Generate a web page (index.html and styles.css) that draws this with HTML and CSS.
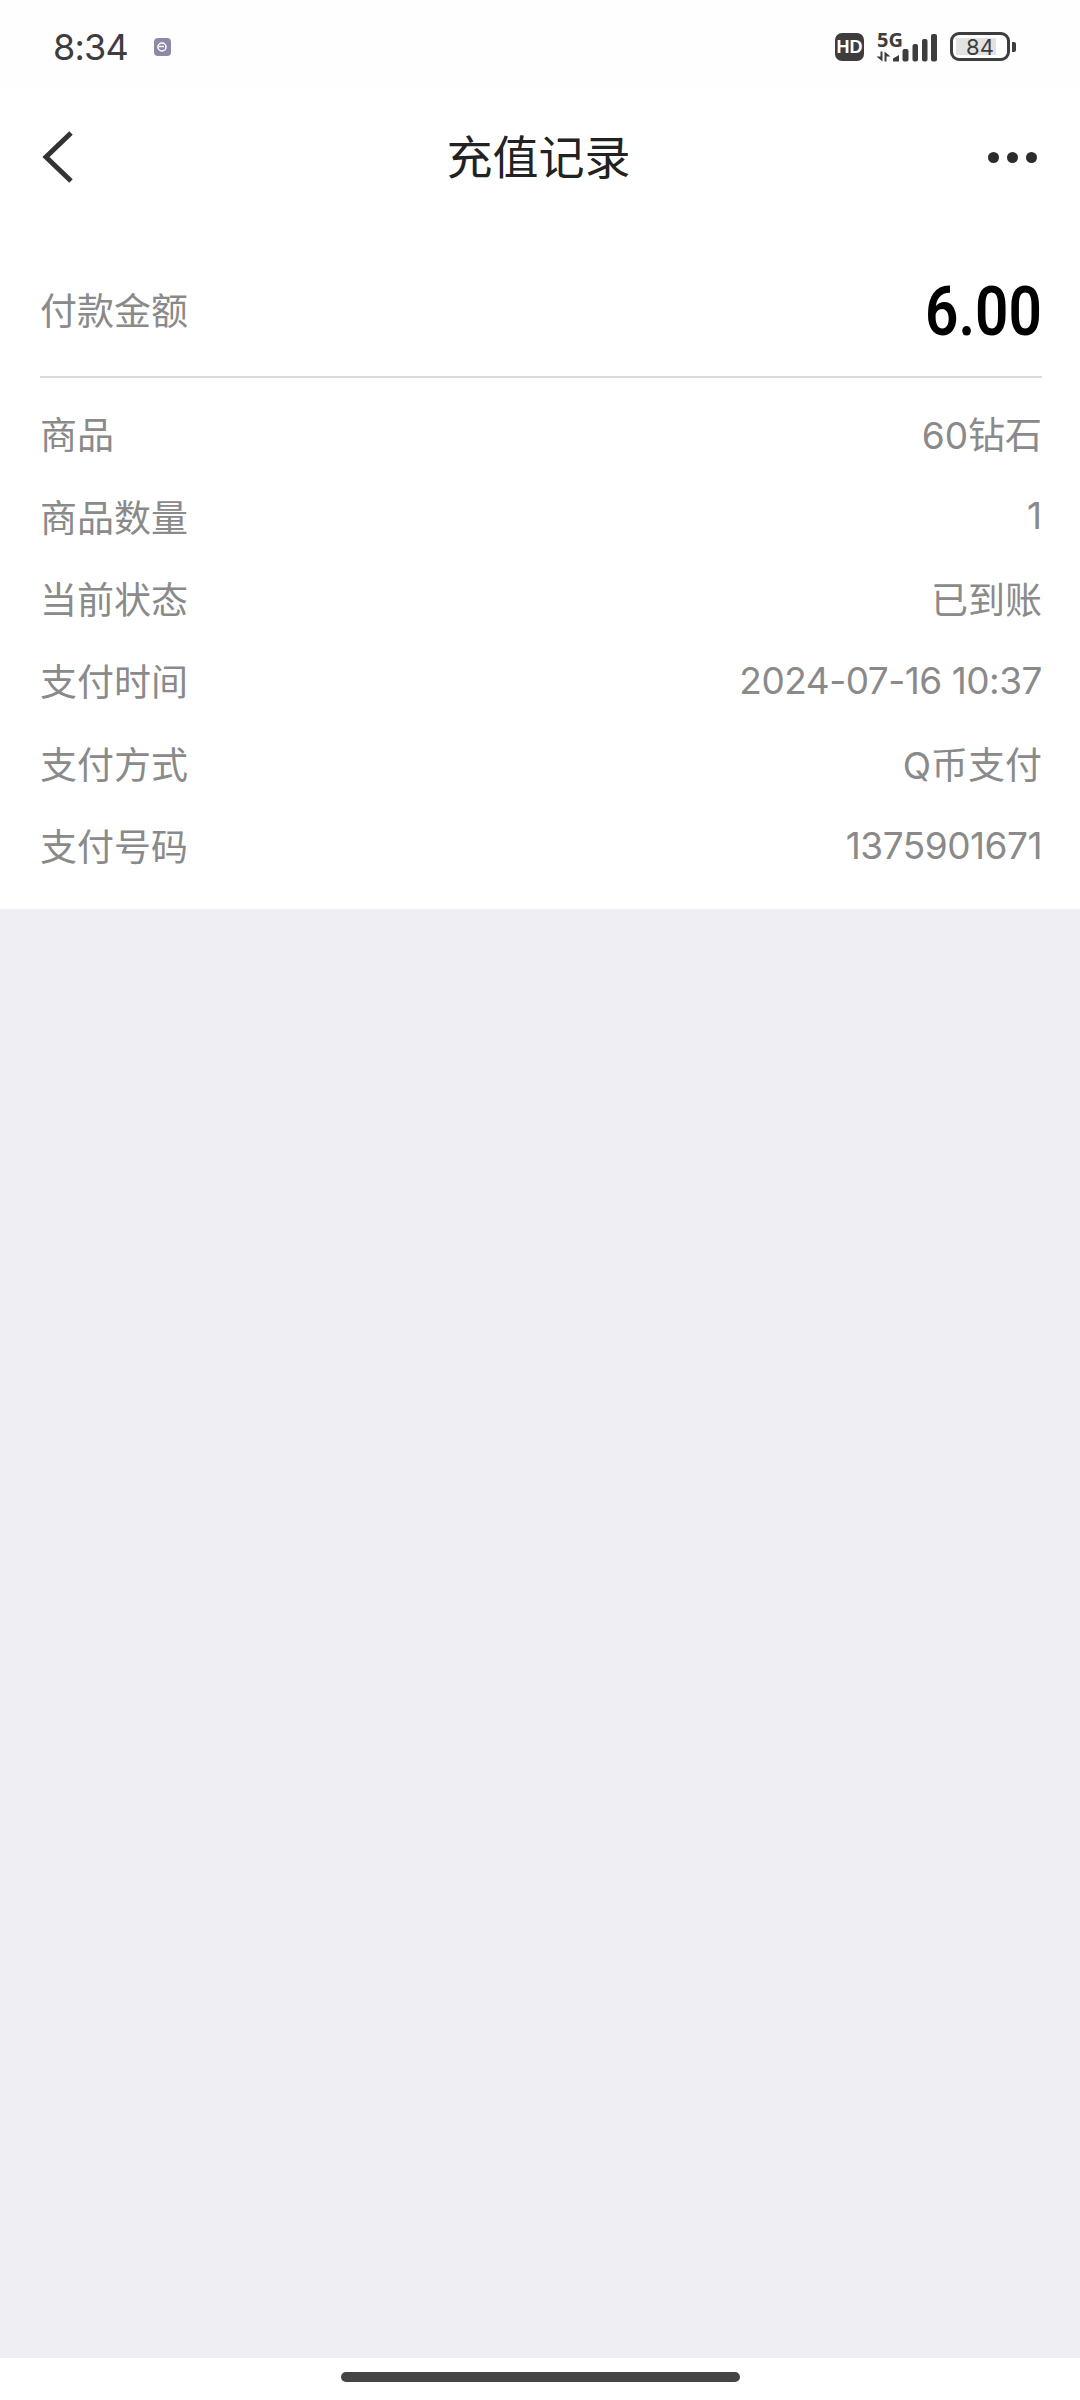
FILE: index.html
```html
<!DOCTYPE html>
<html lang="zh-CN">
  <head>
    <meta charset="UTF-8" />
    <title>充值记录</title>
    <link rel="stylesheet" href="styles.css">
  </head>
  <body>
    <div class="status-bar">
      <div class="status-left">
        <span class="time">8:34</span>
        <svg class="app-dot" width="17" height="18" viewBox="0 0 17 18">
          <rect width="17" height="18" rx="4" fill="#8d8aa8" />
          <circle cx="8" cy="9" r="4" fill="#8d8aa8" stroke="#fff" stroke-width="1.500" />
          <path d="M5 8.500h5" stroke="#fff" stroke-width="1.500" />
        </svg>
      </div>
      <div class="status-right">
        <svg class="hd" width="29" height="28" viewBox="0 0 29 28">
          <rect width="29" height="28" rx="7" fill="#3d3d3d" />
          <text x="14.500" y="20" text-anchor="middle" class="hd-text">HD</text>
        </svg>
        <svg class="signal" width="62" height="42" viewBox="0 -6 62 42">
          <text x="1" y="14.500" class="net-text">5G</text>
          <path d="M6.500 19.500v10l-6-5h4v-5zM8.500 29.500v-10l6 5h-4v5z" fill="#3d3d3d" />
          <path d="M17 29.500v-3l6-3.500v6.500z" fill="#3d3d3d" />
          <rect x="26.500" y="17" width="6" height="12.500" rx="2" fill="#3d3d3d" />
          <rect x="36.500" y="12" width="5.500" height="17.500" rx="2" fill="#3d3d3d" />
          <rect x="46" y="7" width="5.500" height="22.500" rx="2" fill="#3d3d3d" />
          <rect x="55" y="2" width="6" height="27.500" rx="2" fill="#3d3d3d" />
        </svg>
        <div class="battery">
          <div class="battery-body">
            <div class="battery-fill"></div>
            <span class="battery-num">84</span>
          </div>
          <div class="battery-nub"></div>
        </div>
      </div>
    </div>

    <div class="nav">
      <div class="nav-side">
        <svg class="back" width="34" height="54" viewBox="0 0 34 54">
          <path d="M31 3L6 27L31 51" fill="none" stroke="#333" stroke-width="5" />
        </svg>
      </div>
      <div class="nav-title">充值记录</div>
      <div class="nav-side more">
        <span class="dot"></span>
        <span class="dot"></span>
        <span class="dot"></span>
      </div>
    </div>

    <div class="detail">
      <div class="amount-row">
        <span class="label">付款金额</span>
        <span class="amount">6.00</span>
      </div>
      <div class="rows">
        <div class="row"><span class="label">商品</span><span class="value">60钻石</span></div>
        <div class="row"><span class="label">商品数量</span><span class="value">1</span></div>
        <div class="row"><span class="label">当前状态</span><span class="value">已到账</span></div>
        <div class="row"><span class="label">支付时间</span><span class="value num">2024-07-16 10:37</span></div>
        <div class="row"><span class="label">支付方式</span><span class="value">Q币支付</span></div>
        <div class="row"><span class="label">支付号码</span><span class="value num">1375901671</span></div>
      </div>
    </div>

    <div class="filler"></div>

    <div class="home-area">
      <div class="home-bar"></div>
    </div>
  </body>
</html>
```

FILE: styles.css
```css
html,
body {
  margin: 0;
  padding: 0;
  height: 100%;
}

body {
  display: flex;
  flex-direction: column;
  height: 2400px;
  background: #fff;
  font-family: Inter, "Noto Sans CJK SC", sans-serif;
}

.status-bar {
  display: flex;
  align-items: center;
  justify-content: space-between;
  height: 87px;
  padding: 6px 64px 0 53px;
  box-sizing: border-box;
  background: #fefefe;
}

.status-left {
  display: flex;
  align-items: center;
  gap: 26px;
}

.time {
  font-size: 36px;
  letter-spacing: -0.800px;
  color: #3d3d3d;
  line-height: 40px;
}

.status-right {
  display: flex;
  align-items: center;
  gap: 12px;
}

.hd-text {
  font-family: "Liberation Sans", sans-serif;
  font-size: 18px;
  font-weight: 700;
  fill: #fff;
}

.net-text {
  font-family: "Noto Sans", sans-serif;
  font-size: 20px;
  font-weight: 700;
  fill: #3d3d3d;
}

.battery {
  display: flex;
  align-items: center;
  gap: 2px;
}

.battery-body {
  position: relative;
  width: 60px;
  height: 29px;
  box-sizing: border-box;
  border: 3px solid #3d3d3d;
  border-radius: 9px;
}

.battery-fill {
  width: 40px;
  height: 17px;
  margin: 3px 0 0 3px;
  background: #e2e2e2;
}

.battery-num {
  position: absolute;
  left: 0;
  right: 0;
  top: 0;
  text-align: center;
  font-size: 22px;
  line-height: 24px;
  color: #3d3d3d;
}

.battery-nub {
  width: 4px;
  height: 10px;
  border-radius: 0 2px 2px 0;
  background: #3d3d3d;
}

.nav {
  display: flex;
  align-items: center;
  justify-content: space-between;
  height: 140px;
  padding: 0 43px 0 40px;
  box-sizing: border-box;
}

.nav-side {
  flex: 1;
  display: flex;
}

.nav-title {
  font-size: 46px;
  line-height: 54px;
  color: #222;
}

.more {
  justify-content: flex-end;
  gap: 8px;
}

.dot {
  width: 11px;
  height: 11px;
  border-radius: 50%;
  background: #2c2c30;
}

.detail {
  padding: 0 38px 0 40px;
  height: 682px;
  box-sizing: border-box;
}

.amount-row {
  display: flex;
  align-items: center;
  justify-content: space-between;
  height: 151px;
  padding-top: 14px;
  border-bottom: 2px solid #dcdcdc;
  box-sizing: border-box;
}

.amount {
  margin-top: 6px;
  font-family: Roboto, sans-serif;
  font-size: 68px;
  font-weight: 600;
  line-height: 70px;
  color: #000;
  transform: scaleX(0.86);
  transform-origin: right center;
}

.rows {
  padding-top: 14px;
}

.row {
  display: flex;
  align-items: center;
  justify-content: space-between;
  height: 82.400px;
}

.label,
.value {
  font-size: 37px;
  color: #8a8a8a;
}

.num {
  letter-spacing: -0.500px;
}

.filler {
  flex: 1;
  background: #eeeef3;
}

.home-area {
  display: flex;
  justify-content: center;
  height: 42px;
  padding-top: 14px;
  box-sizing: border-box;
}

.home-bar {
  width: 399px;
  height: 10px;
  border-radius: 5px;
  background: #444;
}
```
